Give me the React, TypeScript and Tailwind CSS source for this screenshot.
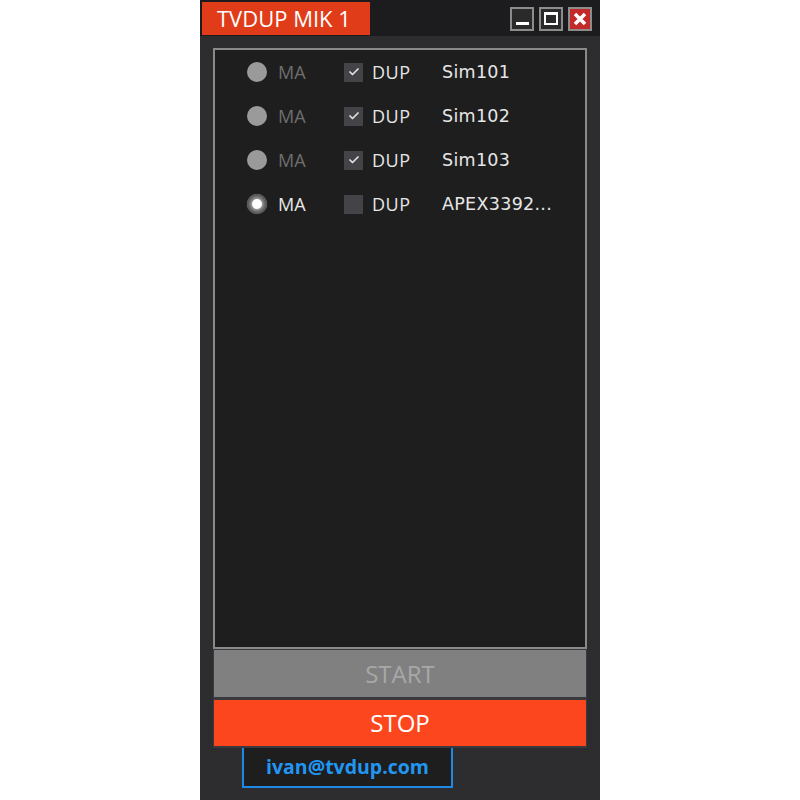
import { Check } from "lucide-react";

const rows = [
  { name: "Sim101", dup: true, active: false },
  { name: "Sim102", dup: true, active: false },
  { name: "Sim103", dup: true, active: false },
  { name: "APEX3392...", dup: false, active: true },
];

function Row({ name, dup, active }: { name: string; dup: boolean; active: boolean }) {
  return (
    <div className="flex items-center h-[44px]">
      <div className="ml-[32px] w-[20px] h-[20px] rounded-full flex items-center justify-center bg-[#9a9a9a]">
        {active && (
          <div className="w-[20px] h-[20px] rounded-full bg-[#4a4a4a] flex items-center justify-center">
            <div className="w-[10px] h-[10px] rounded-full bg-white shadow-[0_0_4px_2px_rgba(255,255,255,0.6)]" />
          </div>
        )}
      </div>
      <span className={`ml-[11px] w-[56px] ${active ? "text-[#e8e8e8]" : "text-[#6e6e6e]"}`}>MA</span>
      <div className="ml-[10px] w-[19px] h-[19px] bg-[#444448] flex items-center justify-center">
        {dup && <Check className="w-[12px] h-[12px] text-[#e0e0e0]" strokeWidth={3.5} />}
      </div>
      <span className="ml-[9px] w-[70px] text-[#e6e6e6] tracking-[0.5px]">DUP</span>
      <span className="text-[#e6e6e6] font-['DejaVu_Sans',sans-serif] text-[17.5px] tracking-[0.3px]">{name}</span>
    </div>
  );
}

export default function App() {
  return (
    <div className="w-[800px] h-[800px] bg-white flex justify-center font-['Open_Sans',sans-serif]">
      <div className="w-[400px] h-[800px] bg-[#2d2d30] flex flex-col">
        {/* title bar */}
        <div className="h-[36px] bg-[#1c1c1e] flex items-stretch pl-[2px] pt-[2px] pb-[1px]">
          <div className="w-[168px] bg-[#e03c1a] text-white text-[22px] flex items-center pl-[15px]">TVDUP MIK 1</div>
          <div className="flex-1" />
          <div className="flex items-center gap-[5px] pr-[8px]">
            <div className="w-[24px] h-[24px] border-2 border-[#8c8c8c] bg-[#2a2a2a] flex items-end justify-center pb-[4px]">
              <div className="w-[13px] h-[3px] bg-white" />
            </div>
            <div className="w-[24px] h-[24px] border-2 border-[#8c8c8c] bg-[#2a2a2a] flex items-center justify-center">
              <div className="w-[14px] h-[13px] border-2 border-t-[3px] border-white" />
            </div>
            <div className="w-[24px] h-[24px] border-2 border-[#8c8c8c] bg-[#c42a2a] flex items-center justify-center">
              <svg width="14" height="14" viewBox="0 0 14 14">
                <path d="M2 2 L12 12 M12 2 L2 12" stroke="white" strokeWidth="3.5" />
              </svg>
            </div>
          </div>
        </div>
        {/* body */}
        <div className="flex-1 flex flex-col px-[13px] pt-[12px]">
          <div className="h-[601px] border-2 border-[#8a8a8a] bg-[#1e1e1e] text-[18px]">
            {rows.map((r) => (
              <Row key={r.name} {...r} />
            ))}
          </div>
          <div className="bg-[#3a3a3e] flex flex-col gap-[3px] px-[1px] pt-[1px] pb-[2px]">
            <div className="h-[47px] bg-[#808080] text-[#a8a8a8] text-[24px] flex items-center justify-center">START</div>
            <div className="h-[46px] bg-[#fc471e] text-white text-[24px] flex items-center justify-center">STOP</div>
          </div>
          <div className="ml-[29px] w-[211px] h-[40px] border-2 border-t-0 border-[#1e88e5] bg-[#1e1e1e] text-[#2196f3] font-bold text-[19.5px] flex items-center justify-center">
            ivan@tvdup.com
          </div>
        </div>
      </div>
    </div>
  );
}
